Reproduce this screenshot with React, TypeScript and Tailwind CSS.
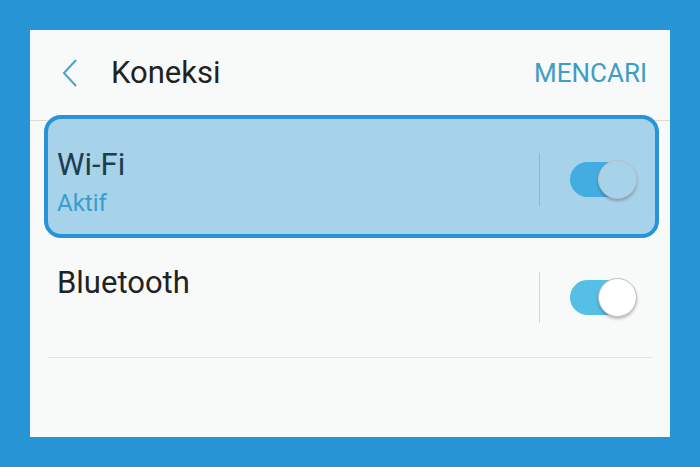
import React from "react";

type ToggleProps = {
  trackColor: string;
  thumbColor: string;
};

function Toggle({ trackColor, thumbColor }: ToggleProps) {
  return (
    <div className="relative w-[67px] h-[39px]">
      <div className={`absolute left-0 top-[2px] w-[62px] h-[35px] rounded-full ${trackColor}`} />
      <div
        className={`absolute right-0 top-0 w-[39px] h-[39px] rounded-full border border-[#bfc2c2] shadow-[0_2px_3px_rgba(0,0,0,0.25)] ${thumbColor}`}
      />
    </div>
  );
}

export default function App() {
  return (
    <div className="w-[700px] h-[467px] bg-[#2794d6] p-[30px] font-['Roboto',sans-serif]">
      <div className="h-full bg-[#f8f9f9] flex flex-col">
        {/* Header */}
        <div className="h-[91px] border-b border-[#dadcdc] flex items-center pl-[31px] pr-[23px] pb-[4px]">
          <svg width="17" height="30" viewBox="0 0 17 30" fill="none">
            <path d="M15 2 L3 15 L15 28" stroke="#4aa3c8" strokeWidth="2" />
          </svg>
          <span className="ml-[33px] text-[31px] leading-[36px] text-[#212121]">Koneksi</span>
          <span className="ml-auto text-[26px] leading-[30px] text-[#3f9dc3]">MENCARI</span>
        </div>

        {/* Wi-Fi (highlighted) */}
        <div className="-mt-[6px] ml-[14px] mr-[11px] h-[123px] border-4 border-[#2794d7] rounded-[17px] bg-[#a6d2ea] flex items-start pl-[9px] pr-[3px]">
          <div className="flex-1 pt-[28px]">
            <div className="text-[31px] leading-[36px] text-[#1e3d50]">Wi-Fi</div>
            <div className="mt-[6px] text-[24px] leading-[28px] text-[#3a9dcb]">Aktif</div>
          </div>
          <div className="w-px h-[53px] mt-[34px] bg-[#8fb8cf]" />
          <div className="ml-[30px] mr-[15px] mt-[41px]">
            <Toggle trackColor="bg-[#43ace0]" thumbColor="bg-[#a6d2ea]" />
          </div>
        </div>

        {/* Bluetooth */}
        <div className="mx-[18px] h-[120px] border-b border-[#e2e4e4] flex items-start pl-[9px]">
          <div className="flex-1 pt-[27px]">
            <div className="text-[31px] leading-[36px] text-[#222222]">Bluetooth</div>
          </div>
          <div className="w-px h-[51px] mt-[34px] bg-[#d5d7d7]" />
          <div className="ml-[30px] mr-[15px] mt-[40px]">
            <Toggle trackColor="bg-[#56bfe5]" thumbColor="bg-white" />
          </div>
        </div>
      </div>
    </div>
  );
}
